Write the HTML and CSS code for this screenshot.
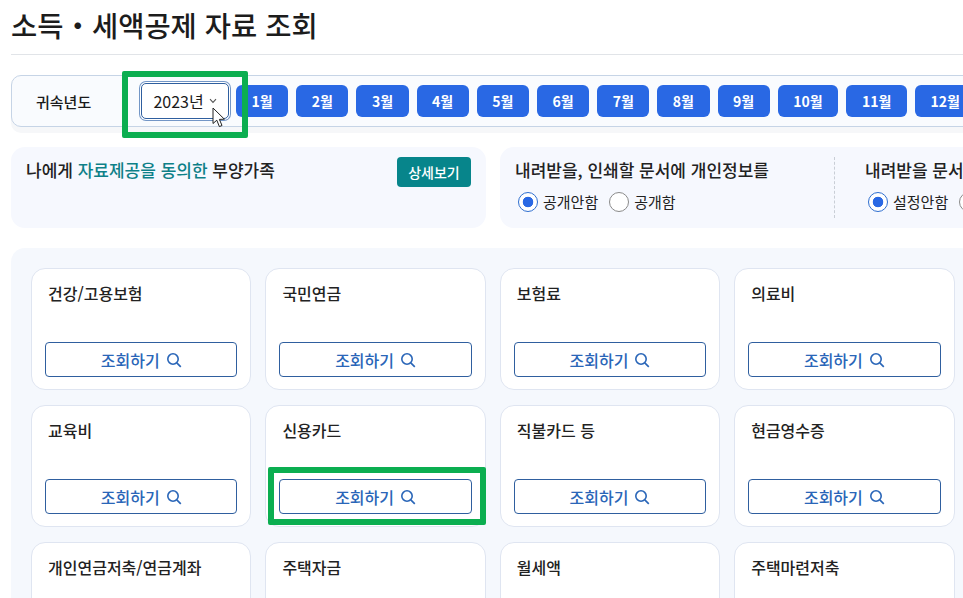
FILE: index.html
```html
<!DOCTYPE html>
<html lang="ko">
<head>
    <meta charset="utf-8">
    <title>소득·세액공제 자료 조회</title>
    <link rel="stylesheet" href="styles.css">
</head>
<body>
<svg class="icon-defs" width="0" height="0">
    <symbol id="search" viewBox="0 0 16 16">
        <circle cx="7" cy="7" r="5.2" fill="none" stroke="currentColor" stroke-width="1.6"/>
        <path d="M10.8 10.8 L14.8 14.8" fill="none" stroke="currentColor" stroke-width="1.7"/>
    </symbol>
</svg>
<div class="page">
    <h1 class="page-title">소득・세액공제 자료 조회</h1>

    <div class="toolbar">
        <span class="toolbar-label">귀속년도</span>
        <div class="year-select">2023년
            <svg class="chevron" viewBox="0 0 8 6" width="8" height="6"><path d="M1 1.2 L4 4.4 L7 1.2" fill="none" stroke="#555" stroke-width="1.1"/></svg>
        </div>
        <div class="months">
            <button class="month">1월</button>
            <button class="month">2월</button>
            <button class="month">3월</button>
            <button class="month">4월</button>
            <button class="month">5월</button>
            <button class="month">6월</button>
            <button class="month">7월</button>
            <button class="month">8월</button>
            <button class="month">9월</button>
            <button class="month wide">10월</button>
            <button class="month wide">11월</button>
            <button class="month wide">12월</button>
        </div>
    </div>

    <div class="info-row">
        <div class="info-panel family">
            <p class="info-title">나에게 <em>자료제공을 동의한</em> 부양가족</p>
            <button class="detail-btn">상세보기</button>
        </div>
        <div class="info-panel options">
            <div class="option">
                <p class="info-title">내려받을, 인쇄할 문서에 개인정보를</p>
                <div class="radios">
                    <span class="radio on"></span><span class="radio-text">공개안함</span>
                    <span class="radio"></span><span class="radio-text">공개함</span>
                </div>
            </div>
            <div class="option second">
                <p class="info-title">내려받을 문서</p>
                <div class="radios">
                    <span class="radio on"></span><span class="radio-text">설정안함</span>
                    <span class="radio"></span>
                </div>
            </div>
        </div>
    </div>

    <div class="cards">
        <div class="card"><h3>건강/고용보험</h3><button class="lookup">조회하기 <svg><use href="#search"/></svg></button></div>
        <div class="card"><h3>국민연금</h3><button class="lookup">조회하기 <svg><use href="#search"/></svg></button></div>
        <div class="card"><h3>보험료</h3><button class="lookup">조회하기 <svg><use href="#search"/></svg></button></div>
        <div class="card"><h3>의료비</h3><button class="lookup">조회하기 <svg><use href="#search"/></svg></button></div>
        <div class="card"><h3>교육비</h3><button class="lookup">조회하기 <svg><use href="#search"/></svg></button></div>
        <div class="card"><h3>신용카드</h3><button class="lookup">조회하기 <svg><use href="#search"/></svg></button></div>
        <div class="card"><h3>직불카드 등</h3><button class="lookup">조회하기 <svg><use href="#search"/></svg></button></div>
        <div class="card"><h3>현금영수증</h3><button class="lookup">조회하기 <svg><use href="#search"/></svg></button></div>
        <div class="card"><h3>개인연금저축/연금계좌</h3></div>
        <div class="card"><h3>주택자금</h3></div>
        <div class="card"><h3>월세액</h3></div>
        <div class="card"><h3>주택마련저축</h3></div>
    </div>
</div>

<!-- green annotation boxes and the mouse pointer sit on top of the page -->
<div class="mark mark-year"></div>
<div class="mark mark-card"></div>
<svg class="pointer" viewBox="0 0 14 22" width="14" height="22">
    <path d="M1 1 L1 16.5 L4.8 13.2 L7.4 19.6 L10 18.5 L7.4 12.4 L12.4 12.2 Z" fill="#fff" stroke="#222" stroke-width="1"/>
</svg>
</body>
</html>
```

FILE: styles.css
```css
html, body {
    margin: 0;
    height: 598px;
    overflow: hidden;
    background: #fff;
}
body {
    position: relative;
    font-family: "Noto Sans CJK KR", "Noto Sans", sans-serif;
    color: #1a1a1a;
}
button {
    font-family: inherit;
    cursor: pointer;
}
.icon-defs {
    position: absolute;
}
.page {
    width: 952px;
    height: 598px;
    padding-left: 11px;
    overflow: hidden;
}
.page-title {
    margin: 0;
    height: 54px;
    border-bottom: 1px solid #e1e4e8;
    font-size: 28.5px;
    font-weight: 500;
    line-height: 49px;
    color: #1c1c1c;
}
.toolbar {
    display: flex;
    align-items: center;
    box-sizing: border-box;
    width: 1000px;
    height: 52px;
    margin-top: 20px;
    border: 1px solid #c6d4e6;
    border-radius: 10px;
    background: #f9fbfe;
    box-shadow: 0 6px 0 #f6f7f9;
}
.toolbar-label {
    flex-shrink: 0;
    width: 129px;
    padding-left: 24px;
    box-sizing: border-box;
    font-size: 15px;
    font-weight: 500;
}
.year-select {
    flex-shrink: 0;
    display: flex;
    align-items: center;
    justify-content: center;
    gap: 5px;
    box-sizing: border-box;
    width: 88px;
    height: 36px;
    border: 1px solid #2f5f9f;
    border-radius: 5px;
    background: #fff;
    box-shadow: 0 0 0 1px #fff, 0 0 0 2px #7396c6;
    font-size: 16px;
}
.months {
    display: flex;
    gap: 8px;
    margin-left: 7px;
}
.month {
    flex-shrink: 0;
    width: 52.2px;
    height: 32px;
    padding: 0;
    border: 0;
    border-radius: 6px;
    background: #2968e4;
    color: #fff;
    font-size: 14px;
    font-weight: 700;
}
.month.wide {
    width: 60.6px;
}
.info-row {
    display: flex;
    gap: 14px;
    margin-top: 20px;
}
.info-panel {
    flex-shrink: 0;
    box-sizing: border-box;
    height: 81px;
    border-radius: 14px;
    background: #f6f8fe;
}
.family {
    display: flex;
    justify-content: space-between;
    align-items: flex-start;
    width: 475px;
    padding: 10px 15px 0 15px;
}
.options {
    display: flex;
    width: 520px;
    padding-top: 10px;
}
.info-title {
    margin: 0;
    font-size: 17px;
    font-weight: 500;
    line-height: 26px;
    color: #222;
}
.info-title em {
    font-style: normal;
    color: #0e8088;
}
.detail-btn {
    width: 74px;
    height: 30px;
    padding: 0;
    border: 0;
    border-radius: 4px;
    background: #07858b;
    color: #fff;
    font-size: 14px;
    font-weight: 500;
}
.option {
    width: 335px;
    flex-shrink: 0;
    height: 61px;
    padding-left: 15px;
    box-sizing: border-box;
    border-right: 1px dashed #c9ced6;
}
.option.second {
    padding-left: 30px;
    border-right: 0;
}
.radios {
    display: flex;
    align-items: center;
    margin-top: 9px;
    padding-left: 3px;
    font-size: 15px;
    line-height: 20px;
}
.radio {
    box-sizing: border-box;
    width: 20px;
    height: 20px;
    border: 1px solid #8a8a8a;
    border-radius: 50%;
    background: #fff;
}
.radio.on {
    border-color: #2f6fd0;
    background: radial-gradient(circle, #2968e4 0 5px, #fff 5.6px);
}
.radio-text {
    margin: 0 11px 0 5px;
    color: #222;
}
.cards {
    display: grid;
    grid-template-columns: repeat(4, 220.4px);
    column-gap: 14px;
    row-gap: 15px;
    width: 924px;
    margin-top: 20px;
    padding: 20px;
    border-radius: 14px;
    background: #f5f8fd;
}
.card {
    box-sizing: border-box;
    height: 122px;
    padding: 11px 13px 0;
    border: 1px solid #dfe5f1;
    border-radius: 14px;
    background: #fff;
}
.card h3 {
    margin: 0 0 0 3px;
    font-size: 16px;
    font-weight: 500;
    line-height: 26px;
    height: 62px;
    color: #222;
}
.lookup {
    display: flex;
    align-items: center;
    justify-content: center;
    gap: 6px;
    width: 100%;
    height: 35px;
    padding: 0;
    border: 1px solid #2f5f9f;
    border-radius: 4px;
    background: #fff;
    color: #2a66b8;
    font-size: 16px;
    font-weight: 500;
}
.lookup svg {
    width: 16px;
    height: 16px;
    color: #2a66b8;
}
.mark {
    position: absolute;
    box-sizing: border-box;
    border: 6px solid #0bae50;
    border-radius: 2px;
}
.mark-year {
    left: 122px;
    top: 71px;
    width: 126px;
    height: 67px;
}
.mark-card {
    left: 268px;
    top: 467px;
    width: 218px;
    height: 58px;
}
.pointer {
    position: absolute;
    left: 212px;
    top: 107px;
}
```
